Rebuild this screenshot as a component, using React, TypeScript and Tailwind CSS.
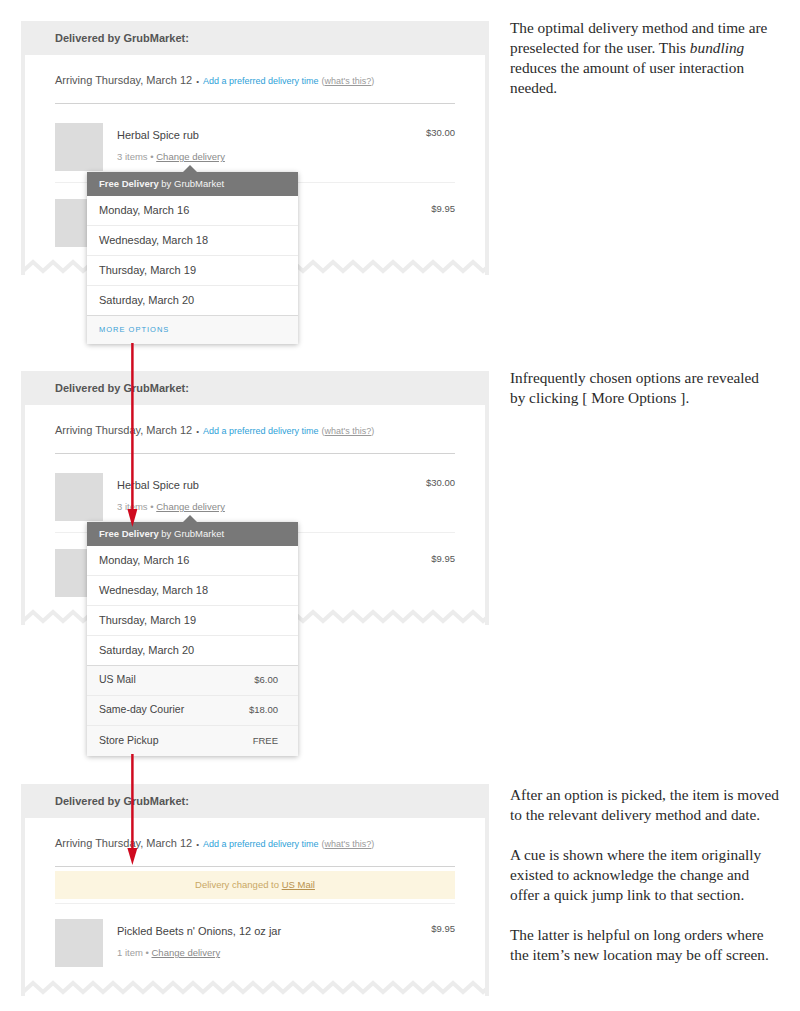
import React from "react";

function Zigzag() {
  const pts: string[] = [];
  for (let i = -1; i < 25; i++) {
    const x0 = 20 * i - 2;
    pts.push(`${x0},13`, `${x0 + 10},4`);
  }
  return (
    <svg width="460" height="17" viewBox="0 0 460 17" className="block">
      <polyline points={pts.join(" ")} fill="none" stroke="#ececec" strokeWidth="4" />
    </svg>
  );
}

function ItemRow({
  name,
  sub,
  price,
  className,
}: {
  name?: string;
  sub?: string;
  price: string;
  className: string;
}) {
  return (
    <div className={`flex ${className}`}>
      <div className="w-[48px] h-[48px] bg-[#dcdcdc] shrink-0" />
      <div className="ml-[14px] flex-1">
        {name ? (
          <>
            <div className="mt-[4px] leading-[16px] text-[11px] text-[#444]">{name}</div>
            <div className="mt-[7px] leading-[14px] text-[9.5px] text-[#a0a0a0]">
              {sub} • <span className="underline text-[#8a8a8a]">Change delivery</span>
            </div>
          </>
        ) : null}
      </div>
      <div className="mt-[3px] leading-[14px] text-[9.5px] text-[#555]">{price}</div>
    </div>
  );
}

function Header() {
  return (
    <div className="h-[34px] bg-[#ededed] flex items-center pl-[30px] text-[11px] font-bold text-[#555]">
      Delivered by GrubMarket:
    </div>
  );
}

function Arriving() {
  return (
    <div className="pt-[17px] pb-[13px] border-b border-[#d2d2d2] leading-[16px] flex items-baseline whitespace-nowrap">
      <span className="text-[11px] text-[#555]">Arriving Thursday, March 12</span>
      <span className="mx-[4px] text-[8px] text-[#555]">•</span>
      <span className="text-[9px] text-[#2f9fd8]">Add a preferred delivery time</span>
      <span className="ml-[3px] text-[9px] text-[#9a9a9a]">
        (<span className="underline">what's this?</span>)
      </span>
    </div>
  );
}

const dates = ["Monday, March 16", "Wednesday, March 18", "Thursday, March 19", "Saturday, March 20"];

function Popover({ extended }: { extended: boolean }) {
  return (
    <div className="absolute left-[62px] top-[150.7px] w-[211px] bg-white shadow-[0_1px_5px_rgba(0,0,0,0.28)] z-10">
      <div className="absolute -top-[7px] left-[96px] w-0 h-0 border-x-[7px] border-x-transparent border-b-[7px] border-b-[#787878]" />
      <div className="h-[24px] bg-[#787878] flex items-center pl-[12px] text-[9.5px] text-[#f4f4f4] whitespace-nowrap">
        <span className="font-bold">Free Delivery</span>&nbsp;by GrubMarket
      </div>
      {dates.map((d, i) => (
        <div
          key={d}
          className={`h-[30px] flex items-center pl-[12px] text-[11px] text-[#444] border-b ${
            i === 3 ? "border-[#dadada]" : "border-[#ececec]"
          }`}
        >
          {d}
        </div>
      ))}
      {extended ? (
        <div className="bg-[#f8f8f8]">
          {[
            ["US Mail", "$6.00"],
            ["Same-day Courier", "$18.00"],
            ["Store Pickup", "FREE"],
          ].map(([n, p], i) => (
            <div
              key={n}
              className={`h-[30px] flex items-center justify-between pl-[12px] pr-[20px] ${
                i < 2 ? "border-b border-[#ebebeb]" : ""
              }`}
            >
              <span className="text-[10.5px] text-[#444]">{n}</span>
              <span className="text-[9.5px] text-[#555]">{p}</span>
            </div>
          ))}
        </div>
      ) : (
        <div className="h-[28px] bg-[#f8f8f8] flex items-center pl-[12px] text-[7.5px] tracking-[1px] text-[#3a9fd6]">
          MORE OPTIONS
        </div>
      )}
    </div>
  );
}

function CardWithPopover({ extended }: { extended: boolean }) {
  return (
    <div className="relative w-[468px] bg-white border-x-4 border-[#ededed]">
      <Header />
      <div className="px-[30px]">
        <Arriving />
        <ItemRow
          name="Herbal Spice rub"
          sub="3 items"
          price="$30.00"
          className="pt-[19px] pb-[11px] border-b border-[#efefef]"
        />
        <ItemRow price="$9.95" className="pt-[16px] pb-[11px]" />
      </div>
      <Zigzag />
      <Popover extended={extended} />
    </div>
  );
}

function CardChanged() {
  return (
    <div className="relative w-[468px] bg-white border-x-4 border-[#ededed]">
      <Header />
      <div className="px-[30px]">
        <Arriving />
        <div className="pt-[4px] pb-[4px] border-b border-[#efefef]">
          <div className="h-[28px] bg-[#fcf5e0] flex items-center justify-center text-[9.5px] text-[#c9a865]">
            Delivery changed to&nbsp;<span className="underline text-[#b8924e]">US Mail</span>
          </div>
        </div>
        <ItemRow
          name="Pickled Beets n' Onions, 12 oz jar"
          sub="1 item"
          price="$9.95"
          className="pt-[15px] pb-[12px]"
        />
      </div>
      <Zigzag />
    </div>
  );
}

const serif =
  "font-['Liberation_Serif','Times_New_Roman',serif] text-[15.3px] leading-[20px] text-[#2a2a2a] whitespace-nowrap";

export default function App() {
  return (
    <div className="relative w-[800px] h-[1011px] bg-white overflow-hidden pt-[21px] font-['Liberation_Sans',Arial,sans-serif]">
      <div className="flex h-[350px]">
        <div className="ml-[21px]">
          <CardWithPopover extended={false} />
        </div>
        <div className={`ml-[21px] -mt-[3px] ${serif}`}>
          The optimal delivery method and time are
          <br />
          preselected for the user. This <em>bundling</em>
          <br />
          reduces the amount of user interaction
          <br />
          needed.
        </div>
      </div>
      <div className="flex h-[413px]">
        <div className="ml-[21px]">
          <CardWithPopover extended={true} />
        </div>
        <div className={`ml-[21px] -mt-[3px] ${serif}`}>
          Infrequently chosen options are revealed
          <br />
          by clicking [ More Options ].
        </div>
      </div>
      <div className="flex">
        <div className="ml-[21px]">
          <CardChanged />
        </div>
        <div className={`ml-[21px] mt-[1px] ${serif}`}>
          <p>
            After an option is picked, the item is moved
            <br />
            to the relevant delivery method and date.
          </p>
          <p className="mt-[20px]">
            A cue is shown where the item originally
            <br />
            existed to acknowledge the change and
            <br />
            offer a quick jump link to that section.
          </p>
          <p className="mt-[20px]">
            The latter is helpful on long orders where
            <br />
            the item’s new location may be off screen.
          </p>
        </div>
      </div>
      <svg
        className="absolute left-0 top-0 pointer-events-none z-20"
        width="800"
        height="1011"
        viewBox="0 0 800 1011"
      >
        <line x1="132.4" y1="343" x2="132.4" y2="512" stroke="#cf0a1f" strokeWidth="2.5" />
        <polygon points="127.4,509 137.4,509 132.4,527" fill="#cf0a1f" />
        <line x1="132.4" y1="754" x2="132.4" y2="851" stroke="#cf0a1f" strokeWidth="2.5" />
        <polygon points="127.4,848 137.4,848 132.4,865" fill="#cf0a1f" />
      </svg>
    </div>
  );
}
